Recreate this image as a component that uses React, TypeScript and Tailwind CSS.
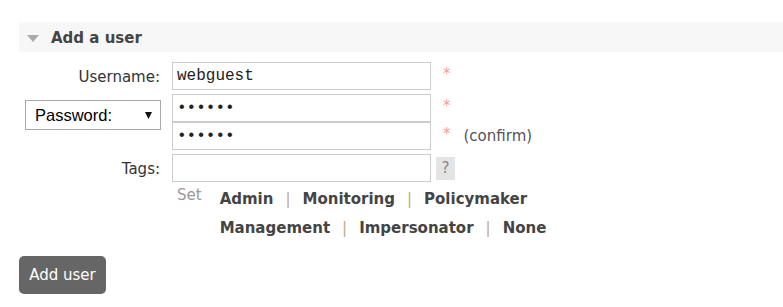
import React from "react";

const font = { fontFamily: '"DejaVu Sans", Verdana, sans-serif' };

function Input({ value, type = "text" }: { value?: string; type?: string }) {
  return (
    <input
      type={type}
      defaultValue={value}
      className="w-[259px] h-[28px] border border-[#cccccc] bg-white px-[4px] text-[16px] text-[#222] outline-none font-['Liberation_Mono','Courier_New',monospace]"
    />
  );
}

function Star() {
  return <span className="ml-[12px] mb-[4px] text-[15px] text-[#f99] leading-none">*</span>;
}

function Sep() {
  return <span className="mx-[12px] font-normal text-[#c4a77f]">|</span>;
}

export default function App() {
  return (
    <div className="w-[783px] h-[307px] bg-white pt-[22px] pl-[19px] text-[#333]" style={font}>
      <div className="h-[30px] bg-[#f7f7f7] flex items-center">
        <svg width="12" height="7" viewBox="0 0 12 7" className="ml-[8px] mt-[2px]">
          <polygon points="0,0 12,0 6,7" fill="#aaaaaa" />
        </svg>
        <span className="ml-[12px] pt-[2px] text-[15px] font-bold text-[#444]">Add a user</span>
      </div>

      <div className="mt-[10px] flex flex-col">
        <div className="flex items-center h-[28px]">
          <div className="w-[141px] pt-[3px] text-right text-[15px] text-[#333]">Username:</div>
          <div className="ml-[12px]">
            <Input value="webguest" />
          </div>
          <Star />
        </div>

        <div className="mt-[4px] flex">
          <div className="w-[142px] pl-[6px] pt-[6px]">
            <div className="h-[30px] w-[136px] border border-[#a9a9a9] bg-white flex items-center justify-between pl-[9px] pr-[8px] font-['Liberation_Sans',Arial,sans-serif] text-[16.5px] text-black">
              <span>Password:</span>
              <svg width="7" height="7" viewBox="0 0 7 7">
                <polygon points="0,0 7,0 3.5,7" fill="#111" />
              </svg>
            </div>
          </div>
          <div className="ml-[11px] flex flex-col">
            <div className="flex items-center">
              <Input type="password" value="passwd" />
              <Star />
            </div>
            <div className="flex items-center">
              <Input type="password" value="passwd" />
              <Star />
              <span className="ml-[13px] pt-[1px] text-[15px] text-[#555]">(confirm)</span>
            </div>
          </div>
        </div>

        <div className="mt-[4px] flex items-center h-[28px]">
          <div className="w-[141px] pt-[3px] text-right text-[15px] text-[#333]">Tags:</div>
          <div className="ml-[12px]">
            <Input />
          </div>
          <div className="ml-[5px] w-[19px] h-[23px] bg-[#e4e4e4] flex items-center justify-center text-[15px] text-[#888]">
            ?
          </div>
        </div>

        <div className="flex mt-[3px]">
          <div className="w-[158px]" />
          <div className="text-[15px] text-[#999] leading-[20px]">Set</div>
          <div className="ml-[18px] flex flex-col text-[15px] font-bold text-[#444] leading-[29px] mt-[0px]">
            <div className="flex">
              <span>Admin</span>
              <Sep />
              <span>Monitoring</span>
              <Sep />
              <span>Policymaker</span>
            </div>
            <div className="flex">
              <span>Management</span>
              <Sep />
              <span>Impersonator</span>
              <Sep />
              <span>None</span>
            </div>
          </div>
        </div>

        <div className="mt-[13px]">
          <button className="h-[38px] w-[87px] rounded-[5px] bg-[#666] text-white text-[15px]">
            Add user
          </button>
        </div>
      </div>
    </div>
  );
}
